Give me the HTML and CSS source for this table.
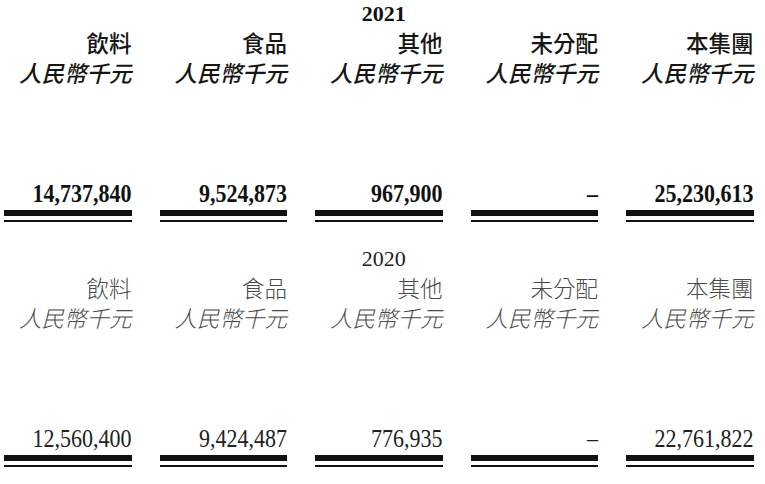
FILE: index.html
```html
<!DOCTYPE html>
<html lang="zh-Hant">
<head>
<meta charset="utf-8">
<link rel="stylesheet" href="styles.css">
</head>
<body>
<div class="page">
  <section class="block current">
    <div class="year">2021</div>
    <div class="grid heads">
      <div>飲料</div><div>食品</div><div>其他</div><div>未分配</div><div>本集團</div>
    </div>
    <div class="grid units">
      <div>人民幣千元</div><div>人民幣千元</div><div>人民幣千元</div><div>人民幣千元</div><div>人民幣千元</div>
    </div>
    <div class="grid nums">
      <div>14,737,840</div><div>9,524,873</div><div>967,900</div><div>–</div><div>25,230,613</div>
    </div>
    <div class="grid rules">
      <div class="rule"></div><div class="rule"></div><div class="rule"></div><div class="rule"></div><div class="rule"></div>
    </div>
  </section>
  <section class="block prior">
    <div class="year">2020</div>
    <div class="grid heads">
      <div>飲料</div><div>食品</div><div>其他</div><div>未分配</div><div>本集團</div>
    </div>
    <div class="grid units">
      <div>人民幣千元</div><div>人民幣千元</div><div>人民幣千元</div><div>人民幣千元</div><div>人民幣千元</div>
    </div>
    <div class="grid nums">
      <div>12,560,400</div><div>9,424,487</div><div>776,935</div><div>–</div><div>22,761,822</div>
    </div>
    <div class="grid rules">
      <div class="rule"></div><div class="rule"></div><div class="rule"></div><div class="rule"></div><div class="rule"></div>
    </div>
  </section>
</div>
</body>
</html>
```

FILE: styles.css
```css
html, body {
  margin: 0;
  padding: 0;
  background: #ffffff;
}
.page {
  width: 765px;
  height: 484px;
  overflow: hidden;
  padding-left: 4px;
  box-sizing: border-box;
}
.block {
  width: 749.5px;
}
.prior {
  margin-top: 23px;
}
.year {
  font-family: "Liberation Serif", "Times New Roman", serif;
  font-size: 22px;
  line-height: 27px;
  height: 27px;
  text-align: center;
  padding-left: 10px;
}
.current .year {
  font-weight: 700;
  color: #111;
}
.prior .year {
  font-weight: 400;
  color: #222;
}
.grid {
  display: grid;
  grid-template-columns: repeat(5, 127.5px);
  column-gap: 28px;
  text-align: right;
}
.heads, .units {
  font-family: "Noto Sans CJK TC", "Noto Sans CJK SC", sans-serif;
  font-size: 22.5px;
  line-height: 30px;
}
.units {
  font-style: italic;
}
.current .heads, .current .units {
  font-weight: 500;
  color: #161616;
}
.prior .heads, .prior .units {
  font-weight: 300;
  color: #4a4a4a;
}
.nums {
  font-family: "Liberation Serif", "Times New Roman", serif;
  font-size: 22px;
  line-height: 26px;
  margin-top: 95px;
  transform: scaleY(1.12);
  transform-origin: 0 20px;
}
.current .nums {
  font-weight: 700;
  color: #111;
}
.prior .nums {
  font-weight: 400;
  color: #222;
}
.rules {
  margin-top: 2px;
}
.rule {
  height: 4px;
  border-top: 6px solid #111;
  border-bottom: 2px solid #111;
  background: #fff;
}
```
